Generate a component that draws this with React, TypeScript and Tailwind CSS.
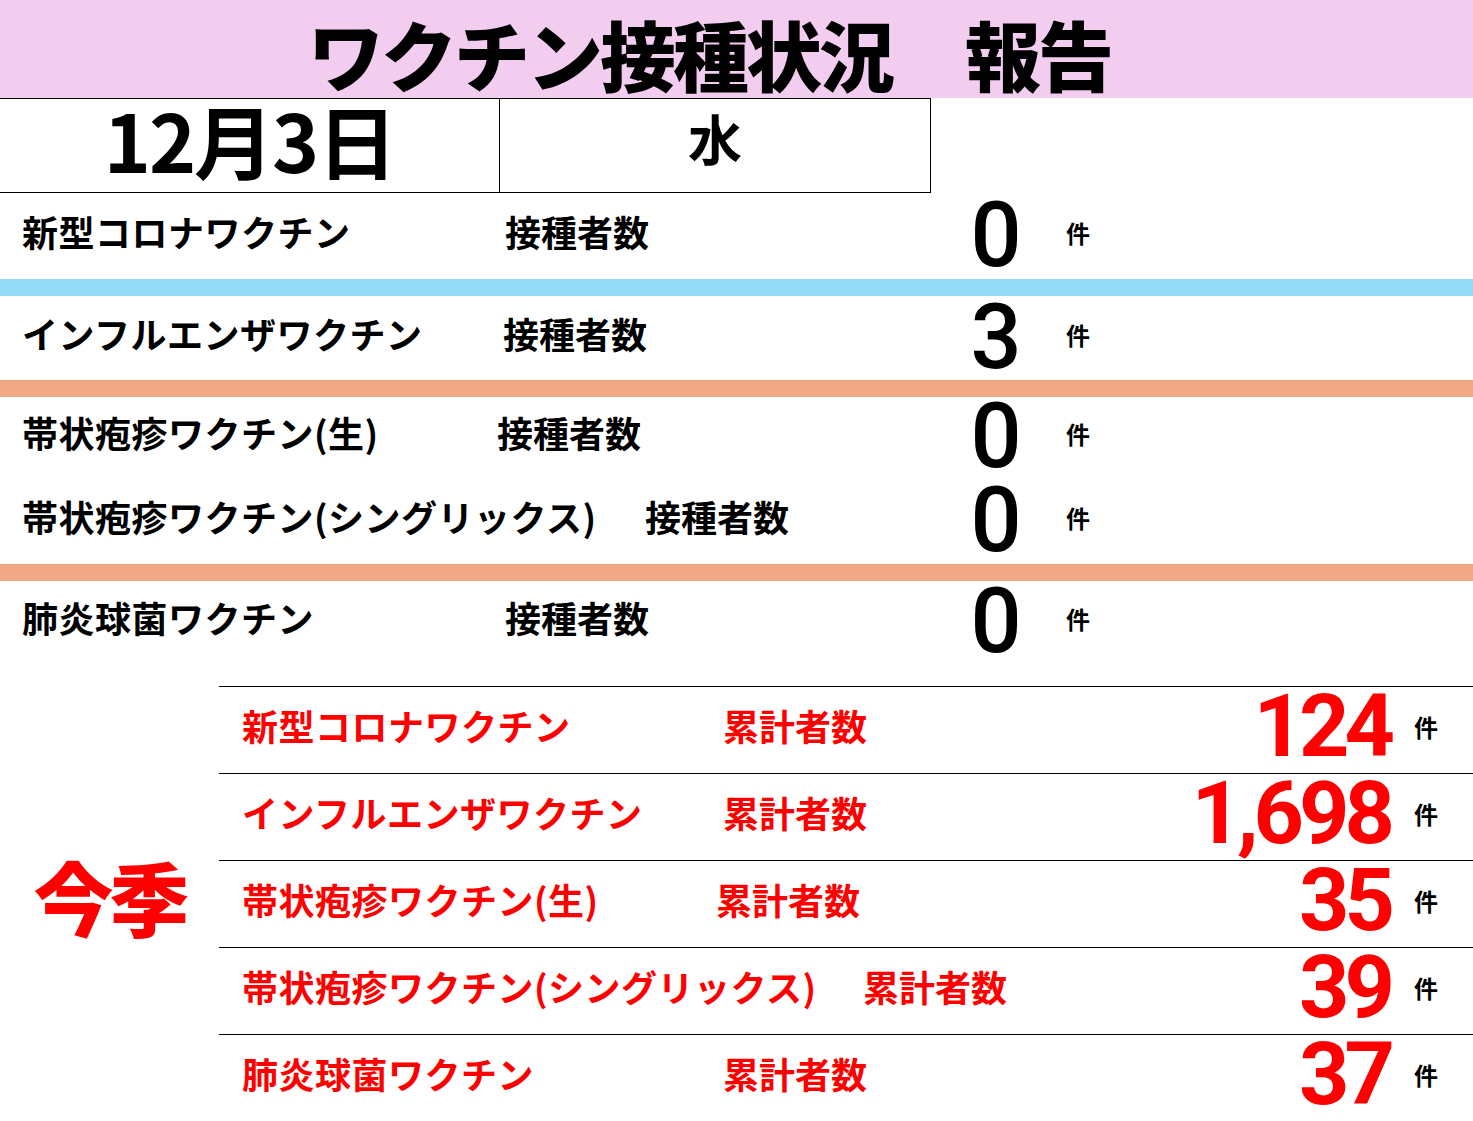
const jp = "font-['Noto_Sans_CJK_JP',sans-serif]";

interface DailyRow {
  name: string;
  nameW: string;
  count: string;
  h: string;
}

const DAILY: DailyRow[] = [
  { name: '新型コロナワクチン', nameW: 'w-[483px]', count: '0', h: 'h-[86px]' },
  { name: 'インフルエンザワクチン', nameW: 'w-[481px]', count: '3', h: 'h-[84px]' },
  { name: '帯状疱疹ワクチン(生)', nameW: 'w-[475px]', count: '0', h: 'h-[80px]' },
  { name: '帯状疱疹ワクチン(シングリックス)', nameW: 'w-[623px]', count: '0', h: 'h-[87px]' },
  { name: '肺炎球菌ワクチン', nameW: 'w-[483px]', count: '0', h: 'h-[82px]' },
];

const SEASON = [
  { name: '新型コロナワクチン', nameW: 'w-[481px]', total: '124' },
  { name: 'インフルエンザワクチン', nameW: 'w-[481px]', total: '1,698' },
  { name: '帯状疱疹ワクチン(生)', nameW: 'w-[474px]', total: '35' },
  { name: '帯状疱疹ワクチン(シングリックス)', nameW: 'w-[621px]', total: '39' },
  { name: '肺炎球菌ワクチン', nameW: 'w-[481px]', total: '37' },
];

function Bar({ color }: { color: string }) {
  return <div className={`h-[17px] w-full ${color}`} />;
}

function DailyLine({ row }: { row: DailyRow }) {
  return (
    <div className={`flex items-center pl-[22px] ${row.h}`}>
      <div className="mb-[10px] flex w-[938px] shrink-0 items-center">
        <span className={`${row.nameW} shrink-0 text-[36px] font-bold leading-none tracking-[0.5px] whitespace-nowrap`}>
          {row.name}
        </span>
        <span className="text-[36px] font-bold leading-none whitespace-nowrap">接種者数</span>
      </div>
      <span className="w-[72px] shrink-0 text-center font-['Roboto',sans-serif] text-[90px] font-medium leading-none">
        {row.count}
      </span>
      <span className="mb-[6px] ml-[34px] text-[24px] font-bold leading-none">件</span>
    </div>
  );
}

export default function App() {
  return (
    <div className={`${jp} w-[1473px] h-[1121px] bg-white text-black overflow-hidden`}>
      <div className="flex h-[98px] items-center bg-[#f2cdf0] pl-[308px] pt-[8px]">
        <h1 className="text-[76px] font-black leading-none tracking-[-3px] whitespace-pre">
          ワクチン接種状況　報告
        </h1>
      </div>

      <div className="flex h-[95px] w-[931px] border-y border-r border-black">
        <div className="flex w-[500px] items-center justify-center border-r border-black pb-[16px]">
          <span className="text-[80px] font-bold leading-none tracking-[-2px]">12月3日</span>
        </div>
        <div className="flex flex-1 items-center justify-center pb-[16px]">
          <span className="text-[54px] font-bold leading-none">水</span>
        </div>
      </div>

      <DailyLine row={DAILY[0]} />
      <Bar color="bg-[#96dbf6]" />
      <DailyLine row={DAILY[1]} />
      <Bar color="bg-[#f0a984]" />
      <DailyLine row={DAILY[2]} />
      <DailyLine row={DAILY[3]} />
      <Bar color="bg-[#f0a984]" />
      <DailyLine row={DAILY[4]} />

      <div className="mt-[23px] flex">
        <div className="flex w-[219px] items-center justify-center pb-[18px]">
          <span className="text-[80px] font-black leading-none text-[#ff0000] tracking-[-4px]">今季</span>
        </div>
        <div className="flex-1 border-b border-black">
          {SEASON.map((r) => (
            <div key={r.name} className="flex h-[87px] items-center border-t border-black pl-[23px] pr-[35px]">
              <div className="mb-[10px] flex items-center">
                <span className={`${r.nameW} shrink-0 text-[36px] font-bold leading-none tracking-[0.5px] text-[#ff0000] whitespace-nowrap`}>
                  {r.name}
                </span>
                <span className="shrink-0 text-[36px] font-bold leading-none text-[#ff0000]">累計者数</span>
              </div>
              <span className="mb-[8px] ml-auto font-['Roboto',sans-serif] text-[88px] font-bold leading-none tracking-[-5px] text-[#ff0000]">
                {r.total}
              </span>
              <span className="mb-[6px] ml-[24px] text-[24px] font-bold leading-none">件</span>
            </div>
          ))}
        </div>
      </div>
    </div>
  );
}
